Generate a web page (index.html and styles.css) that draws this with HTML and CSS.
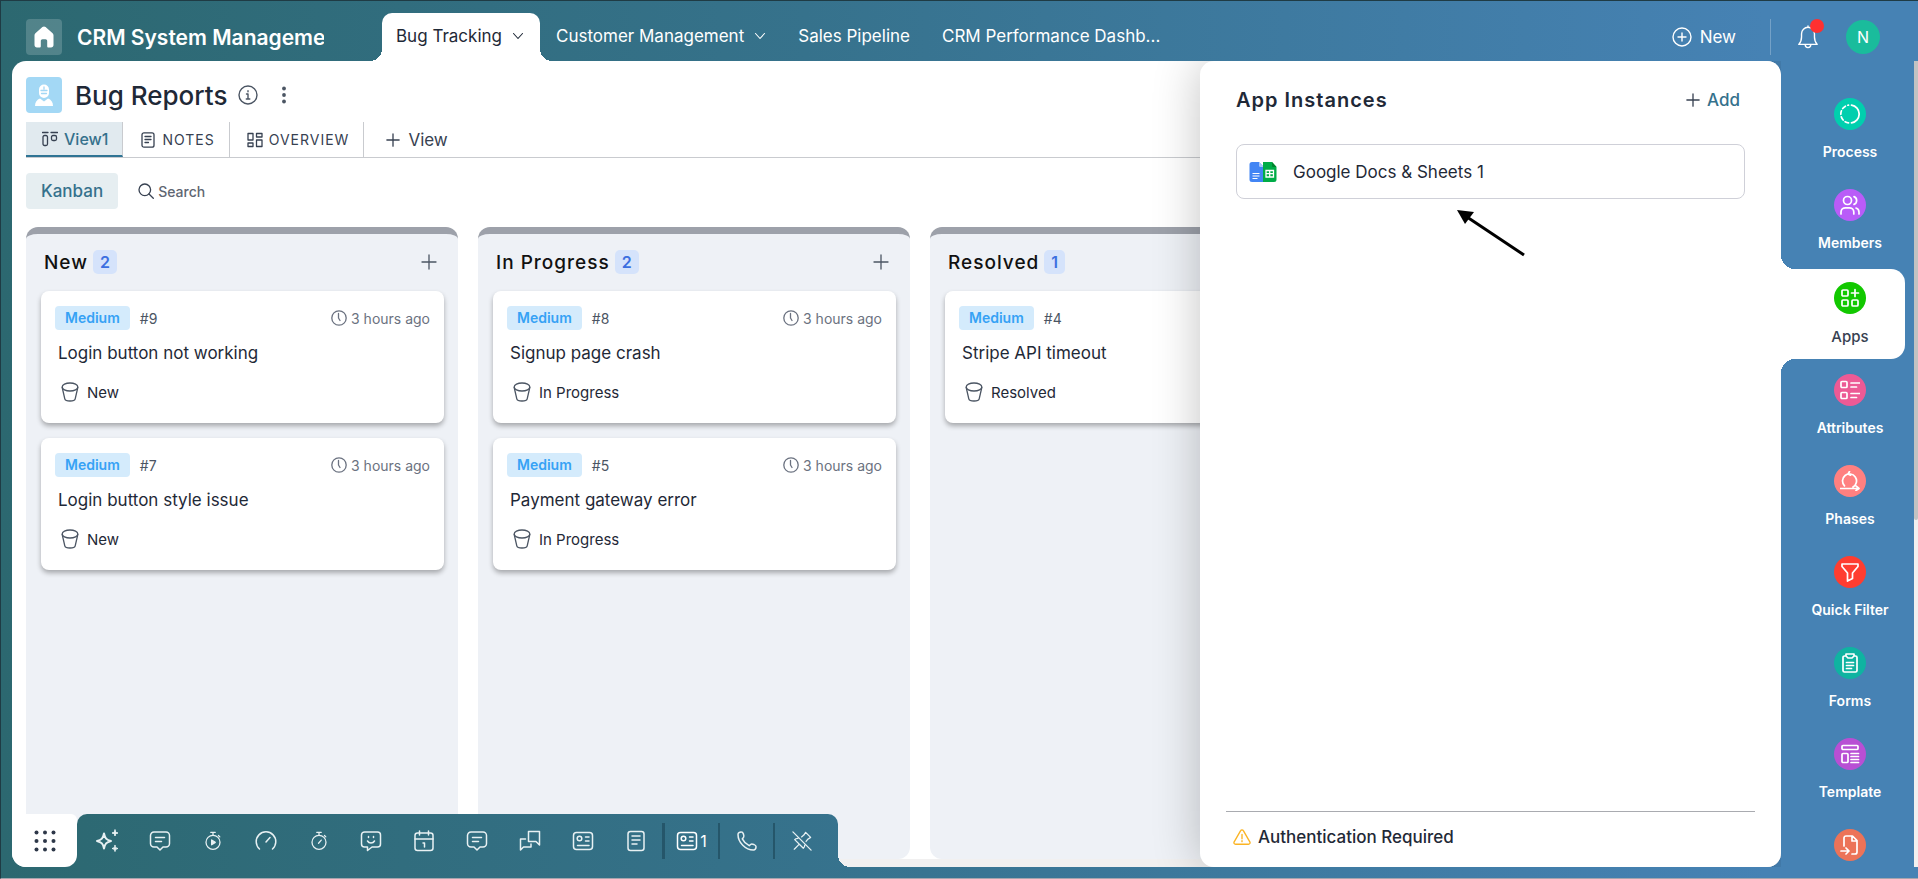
FILE: index.html
```html
<!DOCTYPE html>
<html lang="en">
<head>
    <meta charset="utf-8">
    <meta name="viewport" content="width=device-width, initial-scale=1.0">
    <title>Bug Reports - CRM System Management</title>
    <link rel="stylesheet" href="styles.css">
</head>
<body>
    <!-- Icon sprite -->
    <svg class="sprite" aria-hidden="true">
        <symbol id="i-home" viewBox="0 0 24 24"><path fill="currentColor" d="M12 1.5c.6 0 1.100.2 1.600.6l7 6.200c.6.500.9 1.200.9 2V20c0 1.400-1 2.500-2.500 2.500h-2.500c-.8 0-1.300-.5-1.300-1.300V16c0-1-.7-1.700-1.700-1.700h-3c-1 0-1.700.7-1.700 1.700v5.200c0 .8-.5 1.300-1.300 1.300H5C3.500 22.500 2.500 21.400 2.500 20v-9.700c0-.8.300-1.500.9-2l7-6.200c.5-.4 1-.6 1.600-.6z"/></symbol>
        <symbol id="i-chevron" viewBox="0 0 12 12"><path d="M1.500 3.500 6 8.500l4.500-5"/></symbol>
        <symbol id="i-plus" viewBox="0 0 16 16"><path d="M8 1v14M1 8h14"/></symbol>
        <symbol id="i-plus-circle" viewBox="0 0 20 20"><circle cx="10" cy="10" r="9"/><path d="M10 6v8M6 10h8"/></symbol>
        <symbol id="i-bell" viewBox="0 0 24 26"><path d="M2 21c2-2 3-4 3-8V9.500a7 7 0 0 1 14 0V13c0 4 1 6 3 8zM9 21.500a3 3 0 0 0 6 0M12 2.500V1"/></symbol>
        <symbol id="i-user" viewBox="0 0 24 24"><path fill="#fff" d="M12 1.500a5 5 0 0 1 5 5V10a5 5 0 0 1-10 0V6.500a5 5 0 0 1 5-5zM3 23c0-4 2-6.500 5-7.500l4 3 4-3c3 1 5 3.500 5 7.500z"/><path stroke="#a3d8f5" fill="none" stroke-width="1.300" d="M9 7.500h6M12 4v2M9.500 10.500h5"/></symbol>
        <symbol id="i-info" viewBox="0 0 20 20"><circle cx="10" cy="10" r="9"/><path d="M8.500 9H10v5M8.300 14h3.500M10 5.800v1"/></symbol>
        <symbol id="i-dots" viewBox="0 0 6 18"><g fill="currentColor"><circle cx="3" cy="2.500" r="1.900"/><circle cx="3" cy="9" r="1.900"/><circle cx="3" cy="15.500" r="1.900"/></g></symbol>
        <symbol id="i-kanban" viewBox="0 0 16 16"><path d="M.5 1.500h5.500M9 1.500h6.500"/><rect x="1" y="4.500" width="4.500" height="10" rx="1.500"/><rect x="9.500" y="4.500" width="5" height="5" rx="1.500"/></symbol>
        <symbol id="i-note" viewBox="0 0 14 16"><rect x="1" y=".8" width="12" height="14.400" rx="2"/><path d="M4 4.500h6M4 7.500h6M4 10.500h3.500"/></symbol>
        <symbol id="i-grid" viewBox="0 0 16 16"><rect x="1" y="1.500" width="5" height="6.500"/><rect x="9.500" y="1.500" width="5.500" height="3.500"/><rect x="1" y="11" width="5" height="3.500"/><rect x="9.500" y="8" width="5.500" height="6.500"/></symbol>
        <symbol id="i-search" viewBox="0 0 16 16"><circle cx="6.800" cy="6.800" r="5.800"/><path d="m11 11 4.300 4.300"/></symbol>
        <symbol id="i-clock" viewBox="0 0 16 16"><circle cx="8" cy="8" r="7.200"/><path d="M7.500 3.500V8L9 10.500"/></symbol>
        <symbol id="i-bucket" viewBox="0 0 18 20"><ellipse cx="9" cy="5" rx="7.800" ry="4"/><path d="m1.200 5.500 2.600 11.300c.3 1.200 2.200 2.200 5.200 2.200s4.900-1 5.200-2.200l2.600-11.300"/></symbol>
        <symbol id="i-launcher" viewBox="0 0 22 22"><g fill="currentColor"><circle cx="2.500" cy="2.500" r="2"/><circle cx="11" cy="2.500" r="2"/><circle cx="19.500" cy="2.500" r="2"/><circle cx="2.500" cy="11" r="2"/><circle cx="11" cy="11" r="2"/><circle cx="19.500" cy="11" r="2"/><circle cx="2.500" cy="19.500" r="2"/><circle cx="11" cy="19.500" r="2"/><circle cx="19.500" cy="19.500" r="2"/></g></symbol>
        <symbol id="i-sparkle" viewBox="0 0 24 24"><path stroke-width="2" d="M9 4.500c.9 4.600 2.400 6.400 7 7.500-4.600 1.100-6.100 2.900-7 7.500-.9-4.600-2.400-6.400-7-7.500 4.600-1.100 6.100-2.900 7-7.500z"/><path fill="currentColor" stroke-width="1" d="M20 1c.4 2 1 2.600 3 3-2 .4-2.600 1-3 3-.4-2-1-2.600-3-3 2-.4 2.600-1 3-3zM20 16.500c.4 2 1 2.600 3 3-2 .4-2.600 1-3 3-.4-2-1-2.600-3-3 2-.4 2.600-1 3-3z"/></symbol>
        <symbol id="i-chat" viewBox="0 0 22 22"><path d="M5 2h12a3.500 3.500 0 0 1 3.500 3.500v8A3.500 3.500 0 0 1 17 17h-3l-3 3-3-3H5a3.500 3.500 0 0 1-3.500-3.500v-8A3.500 3.500 0 0 1 5 2zM6.500 7.500h9M6.500 11.500h6"/></symbol>
        <symbol id="i-timer-play" viewBox="0 0 22 22"><circle cx="11" cy="12.500" r="7.700"/><path d="M8.500 1.500h5M11 1.500v3M17 5l1.500 1.500"/><path fill="currentColor" d="M9.500 9.800v5.400l4-2.700z"/></symbol>
        <symbol id="i-gauge" viewBox="0 0 22 22"><path d="M4.500 19A9.800 9.800 0 1 1 17.500 19M11 12l4-4.500"/></symbol>
        <symbol id="i-stopwatch" viewBox="0 0 22 22"><circle cx="11" cy="12.500" r="7.700"/><path d="M8.500 1.500h5M11 1.500v3M17 5l1.500 1.500M10.500 13.500l3-3.500"/></symbol>
        <symbol id="i-smile" viewBox="0 0 22 22"><path d="M4.500 2h13a3 3 0 0 1 3 3v9a3 3 0 0 1-3 3H12l-4.500 3.500V17h-3a3 3 0 0 1-3-3V5a3 3 0 0 1 3-3zM8.500 6.500v1M13.500 6.500v1M7.500 11c1.500 2.500 5.500 2.500 7 0"/></symbol>
        <symbol id="i-calendar" viewBox="0 0 22 22"><rect x="2" y="3" width="18" height="17.500" rx="2.500"/><path d="M6.500 1v4M15.500 1v4M2 9h18M10 13h1.500v4"/></symbol>
        <symbol id="i-chats" viewBox="0 0 22 22"><path d="M9.500 1.500h11V15l-3.500-3.500H9.500zM6.500 9H1.500v11L4.500 17h7.500v-3"/></symbol>
        <symbol id="i-card" viewBox="0 0 22 22"><rect x="1.500" y="2.500" width="19" height="17" rx="3"/><circle cx="7.500" cy="8.500" r="2.300"/><path d="M13.500 7h3.500M13.500 11h3.500M5.500 15.500h11.500"/></symbol>
        <symbol id="i-doc" viewBox="0 0 22 22"><rect x="3" y="1.500" width="16" height="19" rx="2.500"/><path d="M7 6h8M7 10h8M7 14h5"/></symbol>
        <symbol id="i-phone" viewBox="0 0 22 22"><path d="M2 4.500C2 3 3.500 1.800 5.500 2c1.200 0 1.500 1 2 2.200.5 1.300.8 2.300 0 3.200L6.300 8.800c1.500 3 3.900 5.400 6.900 6.900l1.400-1.200c.9-.8 1.900-.5 3.200 0 1.200.5 2.200.8 2.200 2 .2 2-1 3.500-2.500 3.500C9.500 20 2 12.500 2 4.500z"/></symbol>
        <symbol id="i-pin-off" viewBox="0 0 22 22"><path d="M1 1l20 20M2.500 20l5-5M13 4.500l2-3 5.500 5.500-3 2M10.500 6.500 13 4.500M15.500 11.500l2-2.500M6.500 8C4.500 8 3.500 8.500 3 9.500l9.500 9.500c1-.5 1.500-1.500 1.500-3.500"/></symbol>
        <symbol id="i-warning" viewBox="0 0 20 18"><path d="M8.500 1.900a1.700 1.700 0 0 1 3 0l7.200 12.600c.7 1.200-.1 2.500-1.500 2.500H2.800c-1.400 0-2.200-1.300-1.500-2.500zM10 6v5M10 13v1.200"/></symbol>
        <symbol id="i-process" viewBox="0 0 20 20"><path d="M11.500 1.100a9 9 0 0 1 0 17.800"/><path stroke-dasharray="3.600 2.600" d="M8.500 18.900a9 9 0 0 1 0-17.800"/></symbol>
        <symbol id="i-members" viewBox="0 0 20 20"><circle cx="7.500" cy="5.500" r="4"/><path d="M1 19v-2c0-2.500 2-4.200 4.500-4.200h3.800c2.500 0 4.500 1.700 4.500 4.200v2M14 1.600a4.200 4.200 0 0 1 0 7.800M16 13c2 .6 3 2.200 3 4.200V19"/></symbol>
        <symbol id="i-apps" viewBox="0 0 20 20"><rect x="2" y="2" width="6" height="6" rx="1"/><rect x="2" y="12" width="6" height="6" rx="1"/><rect x="12" y="12" width="6" height="6" rx="1"/><path d="M15 1.500v7M11.500 5h7"/></symbol>
        <symbol id="i-attributes" viewBox="0 0 20 20"><rect x="1" y="1.500" width="6" height="6" rx="1"/><rect x="1" y="12.500" width="6" height="6" rx="1"/><path d="M11 3h8.500M11 7h5.500M11 13.500h8.500M11 17.500h5.500"/></symbol>
        <symbol id="i-phases" viewBox="0 0 20 20"><path d="M4.500 14.800A7 7 0 1 1 13 16M.5 17.500h18M16 14.800l3 2.700-3 2M9.500.5 8 3l2.500 1.200"/></symbol>
        <symbol id="i-filter" viewBox="0 0 20 20"><path d="M2 2h16v2.500L12.500 11v5.500L7.500 19v-8L2 4.500z"/></symbol>
        <symbol id="i-forms" viewBox="0 0 20 20"><path d="M6 3H4.500A1.500 1.500 0 0 0 3 4.500v13A1.500 1.500 0 0 0 4.500 19h11a1.500 1.500 0 0 0 1.500-1.500v-13A1.500 1.500 0 0 0 15.500 3H14M6 1h8v2l-2 2H8L6 3zM6.500 9.500h7M6.500 12.500h7M6.500 15.500h5"/></symbol>
        <symbol id="i-template" viewBox="0 0 20 20"><rect x="2" y="1.500" width="16" height="4" rx="1"/><rect x="2" y="9.500" width="6" height="9" rx="1"/><path d="M11 9.500h7.500M11 12.500h7.500M11 15.500h7.500M11 18.500h7.500"/></symbol>
        <symbol id="i-import" viewBox="0 0 20 20"><path d="M4 11V3a2 2 0 0 1 2-2h6.500L17 5.500V17a2 2 0 0 1-2 2h-3M12 1v5h5M1 16h7.500M6 13l3 3-3 3"/></symbol>
    </svg>

    <header class="topbar">
        <a class="home" href="#" aria-label="Home"><svg class="icon icon-24"><use href="#i-home"/></svg></a>
        <h1 class="app-name">CRM System Management</h1>
        <nav class="app-tabs">
            <a class="app-tab active" href="#">Bug Tracking <svg class="icon icon-12"><use href="#i-chevron"/></svg></a>
            <a class="app-tab" href="#">Customer Management <svg class="icon icon-12"><use href="#i-chevron"/></svg></a>
            <a class="app-tab" href="#">Sales Pipeline</a>
            <a class="app-tab" href="#">CRM Performance Dashb...</a>
        </nav>
        <button class="new-button" type="button"><svg class="icon icon-20"><use href="#i-plus-circle"/></svg>New</button>
        <div class="account">
            <button class="bell" type="button" aria-label="Notifications"><svg class="icon icon-24"><use href="#i-bell"/></svg></button>
            <button class="avatar" type="button">N</button>
        </div>
    </header>

    <div class="layout">
        <main class="workspace">
            <div class="page-title">
                <span class="page-icon"><svg class="icon icon-24"><use href="#i-user"/></svg></span>
                <h2>Bug Reports</h2>
                <button class="plain" type="button" aria-label="Info"><svg class="icon icon-20"><use href="#i-info"/></svg></button>
                <button class="plain more" type="button" aria-label="More"><svg class="icon icon-dots"><use href="#i-dots"/></svg></button>
            </div>

            <nav class="view-tabs">
                <a class="view-tab active" href="#"><svg class="icon icon-16"><use href="#i-kanban"/></svg>View1</a>
                <a class="view-tab" href="#"><svg class="icon icon-16"><use href="#i-note"/></svg>NOTES</a>
                <a class="view-tab" href="#"><svg class="icon icon-16"><use href="#i-grid"/></svg>OVERVIEW</a>
                <button class="add-view" type="button"><svg class="icon icon-14"><use href="#i-plus"/></svg>View</button>
            </nav>

            <div class="board-tools">
                <button class="kanban-button" type="button">Kanban</button>
                <label class="search">
                    <svg class="icon icon-16"><use href="#i-search"/></svg>
                    <input type="text" placeholder="Search" aria-label="Search">
                </label>
            </div>

            <div class="board">
                <section class="column">
                    <header class="column-header">
                        <h3>New</h3><span class="count">2</span>
                        <button class="plain" type="button" aria-label="Add card"><svg class="icon icon-16"><use href="#i-plus"/></svg></button>
                    </header>
                    <article class="card">
                        <div class="card-meta">
                            <span class="priority">Medium</span><span class="card-id">#9</span>
                            <span class="card-time"><svg class="icon icon-16"><use href="#i-clock"/></svg>3 hours ago</span>
                        </div>
                        <h4>Login button not working</h4>
                        <p class="card-stage"><svg class="icon icon-bucket"><use href="#i-bucket"/></svg>New</p>
                    </article>
                    <article class="card">
                        <div class="card-meta">
                            <span class="priority">Medium</span><span class="card-id">#7</span>
                            <span class="card-time"><svg class="icon icon-16"><use href="#i-clock"/></svg>3 hours ago</span>
                        </div>
                        <h4>Login button style issue</h4>
                        <p class="card-stage"><svg class="icon icon-bucket"><use href="#i-bucket"/></svg>New</p>
                    </article>
                </section>

                <section class="column">
                    <header class="column-header">
                        <h3>In Progress</h3><span class="count">2</span>
                        <button class="plain" type="button" aria-label="Add card"><svg class="icon icon-16"><use href="#i-plus"/></svg></button>
                    </header>
                    <article class="card">
                        <div class="card-meta">
                            <span class="priority">Medium</span><span class="card-id">#8</span>
                            <span class="card-time"><svg class="icon icon-16"><use href="#i-clock"/></svg>3 hours ago</span>
                        </div>
                        <h4>Signup page crash</h4>
                        <p class="card-stage"><svg class="icon icon-bucket"><use href="#i-bucket"/></svg>In Progress</p>
                    </article>
                    <article class="card">
                        <div class="card-meta">
                            <span class="priority">Medium</span><span class="card-id">#5</span>
                            <span class="card-time"><svg class="icon icon-16"><use href="#i-clock"/></svg>3 hours ago</span>
                        </div>
                        <h4>Payment gateway error</h4>
                        <p class="card-stage"><svg class="icon icon-bucket"><use href="#i-bucket"/></svg>In Progress</p>
                    </article>
                </section>

                <section class="column">
                    <header class="column-header">
                        <h3>Resolved</h3><span class="count">1</span>
                    </header>
                    <article class="card">
                        <div class="card-meta">
                            <span class="priority">Medium</span><span class="card-id">#4</span>
                        </div>
                        <h4>Stripe API timeout</h4>
                        <p class="card-stage"><svg class="icon icon-bucket"><use href="#i-bucket"/></svg>Resolved</p>
                    </article>
                </section>
            </div>

            <!-- Bottom dock -->
            <div class="dock">
                <button class="launcher" type="button" aria-label="All apps"><svg class="icon icon-22"><use href="#i-launcher"/></svg></button>
                <div class="toolbar">
                    <div class="tool-group">
                        <button class="tool" type="button" aria-label="Assistant"><svg class="icon icon-24"><use href="#i-sparkle"/></svg></button>
                        <button class="tool" type="button" aria-label="Messages"><svg class="icon icon-22"><use href="#i-chat"/></svg></button>
                        <button class="tool" type="button" aria-label="Start timer"><svg class="icon icon-20"><use href="#i-timer-play"/></svg></button>
                        <button class="tool" type="button" aria-label="Dashboard"><svg class="icon icon-22"><use href="#i-gauge"/></svg></button>
                        <button class="tool" type="button" aria-label="Stopwatch"><svg class="icon icon-20"><use href="#i-stopwatch"/></svg></button>
                        <button class="tool" type="button" aria-label="Feedback"><svg class="icon icon-22"><use href="#i-smile"/></svg></button>
                        <button class="tool" type="button" aria-label="Calendar"><svg class="icon icon-22"><use href="#i-calendar"/></svg></button>
                        <button class="tool" type="button" aria-label="Comments"><svg class="icon icon-22"><use href="#i-chat"/></svg></button>
                        <button class="tool" type="button" aria-label="Conversations"><svg class="icon icon-22"><use href="#i-chats"/></svg></button>
                        <button class="tool" type="button" aria-label="Contacts"><svg class="icon icon-22"><use href="#i-card"/></svg></button>
                        <button class="tool" type="button" aria-label="Documents"><svg class="icon icon-22"><use href="#i-doc"/></svg></button>
                    </div>
                    <button class="tool divided wide" type="button"><svg class="icon icon-22"><use href="#i-card"/></svg>1</button>
                    <button class="tool divided" type="button" aria-label="Call"><svg class="icon icon-22"><use href="#i-phone"/></svg></button>
                    <button class="tool divided" type="button" aria-label="Unpin toolbar"><svg class="icon icon-20"><use href="#i-pin-off"/></svg></button>
                </div>
            </div>

            <!-- App instances drawer -->
            <aside class="drawer">
                <header class="drawer-header">
                    <h2>App Instances</h2>
                    <button class="add-button" type="button"><svg class="icon icon-14"><use href="#i-plus"/></svg>Add</button>
                </header>
                <button class="instance" type="button">
                    <svg class="instance-logo" viewBox="0 0 28 22">
                        <path fill="#4285f4" d="M3 1h7l5 5v15H3a2.500 2.500 0 0 1-2.500-2.500v-15A2.500 2.500 0 0 1 3 1z"/>
                        <path fill="#a8c7fa" d="M10 1l5 5h-3.500A1.500 1.500 0 0 1 10 4.500z"/>
                        <path stroke="#fff" stroke-width="1.200" d="M3.500 12.500h7M3.500 15h7M3.500 17.500h5"/>
                        <path fill="#00ac47" d="M14 1h9l4.500 5v12.500A2.500 2.500 0 0 1 25 21H14z"/>
                        <path fill="#00832d" d="M23 1l4.500 5H24a1 1 0 0 1-1-1z"/>
                        <path fill="none" stroke="#fff" stroke-width="1.300" d="M17 9.500h7.500v6.500H17zM17 12.700h7.500M20.700 9.500V16"/>
                    </svg>
                    Google Docs &amp; Sheets 1
                </button>
                <svg class="pointer" viewBox="0 0 70 47" aria-hidden="true">
                    <path d="M10 7 67 45" stroke="#000" stroke-width="3"/>
                    <path d="M0 0l17 2-9 12z"/>
                </svg>
                <footer class="drawer-footer"><svg class="icon icon-18"><use href="#i-warning"/></svg>Authentication Required</footer>
            </aside>
        </main>

        <nav class="sidebar">
            <a class="side-item" href="#"><span class="side-icon process"><svg class="icon icon-20"><use href="#i-process"/></svg></span>Process</a>
            <a class="side-item" href="#"><span class="side-icon members"><svg class="icon icon-20"><use href="#i-members"/></svg></span>Members</a>
            <a class="side-item active" href="#"><span class="side-icon apps"><svg class="icon icon-20"><use href="#i-apps"/></svg></span>Apps</a>
            <a class="side-item" href="#"><span class="side-icon attributes"><svg class="icon icon-20"><use href="#i-attributes"/></svg></span>Attributes</a>
            <a class="side-item" href="#"><span class="side-icon phases"><svg class="icon icon-20"><use href="#i-phases"/></svg></span>Phases</a>
            <a class="side-item" href="#"><span class="side-icon filter"><svg class="icon icon-20"><use href="#i-filter"/></svg></span>Quick Filter</a>
            <a class="side-item" href="#"><span class="side-icon forms"><svg class="icon icon-20"><use href="#i-forms"/></svg></span>Forms</a>
            <a class="side-item" href="#"><span class="side-icon template"><svg class="icon icon-20"><use href="#i-template"/></svg></span>Template</a>
            <a class="side-item" href="#" aria-label="Import"><span class="side-icon import"><svg class="icon icon-20"><use href="#i-import"/></svg></span></a>
        </nav>
        <div class="scroll-track"><div class="scroll-thumb"></div></div>
    </div>
</body>
</html>
```
FILE: styles.css
```css
:root {
    --brand: linear-gradient(to right, #2c6870, #36728c 42%, #4682b4 92%);
    --teal: #35718c;
    --text: #1f2937;
    --muted: #6b7280;
    --line: #c9cbcf;
    --column: #eef1f6;
    --radius: 14px;
}

* {
    margin: 0;
    padding: 0;
    box-sizing: border-box;
}

body {
    font-family: Inter, "Liberation Sans", sans-serif;
    font-size: 16px;
    color: var(--text);
    background: var(--brand) fixed;
    border: 1px solid #1f3b44;
    border-right: 0;
    border-bottom-color: #a9a4ad;
    height: 100vh;
    display: flex;
    flex-direction: column;
    overflow: hidden;
}

a {
    color: inherit;
    text-decoration: none;
}

button {
    font: inherit;
    color: inherit;
    background: none;
    border: 0;
    cursor: pointer;
}

h1, h2, h3, h4 {
    font-weight: 500;
}

.sprite {
    position: absolute;
    width: 0;
    height: 0;
}

/* Icons */
.icon {
    flex: none;
    fill: none;
    stroke: currentColor;
    stroke-width: 1.5;
    stroke-linecap: round;
    stroke-linejoin: round;
}

.icon-12 { width: 12px; height: 12px; stroke-width: 1.1; }
.icon-14 { width: 14px; height: 14px; }
.icon-16 { width: 16px; height: 16px; stroke-width: 1.3; }
.icon-18 { width: 18px; height: 18px; }
.icon-20 { width: 20px; height: 20px; stroke-width: 1.4; }
.icon-22 { width: 22px; height: 22px; }
.icon-24 { width: 24px; height: 24px; }
.icon-dots { width: 6px; height: 18px; stroke: none; }
.icon-bucket { width: 18px; height: 20px; stroke-width: 1.3; }

/* Top bar */
.topbar {
    flex: none;
    height: 60px;
    display: flex;
    align-items: center;
    padding: 12px 0 0 25px;
    color: #fff;
}

.home {
    width: 36px;
    height: 36px;
    display: grid;
    place-items: center;
    border-radius: 4px;
    background: rgba(255, 255, 255, 0.18);
}

.home .icon {
    stroke: none;
}

.app-name {
    width: 247px;
    margin: 0 58px 0 15px;
    font-size: 21px;
    font-weight: 600;
    white-space: nowrap;
    overflow: hidden;
}

.app-tabs {
    display: flex;
    flex: 1;
    font-size: 17px;
}

.app-tab {
    display: flex;
    align-items: center;
    gap: 10px;
    height: 48px;
    padding: 0 16px 3px;
    white-space: nowrap;
}

.app-tab.active {
    position: relative;
    background: #fff;
    color: var(--text);
    border-radius: 10px 10px 0 0;
    padding-left: 14px;
}

.app-tab.active::before,
.app-tab.active::after {
    content: "";
    position: absolute;
    bottom: 0;
    width: 12px;
    height: 12px;
}

.app-tab.active::before {
    right: 100%;
    background: radial-gradient(circle at top left, transparent 12px, #fff 12px);
}

.app-tab.active::after {
    left: 100%;
    background: radial-gradient(circle at top right, transparent 12px, #fff 12px);
}

.new-button {
    display: flex;
    align-items: center;
    gap: 8px;
    font-size: 17px;
    margin-right: 34px;
}

.account {
    display: flex;
    align-items: center;
    gap: 26px;
    height: 36px;
    padding: 0 38px 0 25px;
    border-left: 1px solid rgba(255, 255, 255, 0.25);
}

.bell {
    position: relative;
    display: flex;
}

.bell::after {
    content: "";
    position: absolute;
    top: -6px;
    right: -4px;
    width: 14px;
    height: 14px;
    border-radius: 50%;
    background: #ff3030;
}

.avatar {
    width: 34px;
    height: 34px;
    border-radius: 50%;
    background: #1abc9c;
    font-size: 16px;
}

/* Layout */
.layout {
    flex: 1;
    min-height: 0;
    display: flex;
    padding: 0 0 11px 11px;
}

.workspace {
    position: relative;
    flex: 1;
    min-width: 0;
    display: flex;
    flex-direction: column;
    padding: 16px 0 0 14px;
    background: #fff;
    border-radius: var(--radius);
}

.page-title {
    display: flex;
    align-items: center;
    height: 36px;
    gap: 11px;
}

.page-title h2 {
    font-size: 26px;
    margin-left: 2px;
}

.page-icon {
    width: 36px;
    height: 36px;
    display: grid;
    place-items: center;
    border-radius: 4px;
    background: #a3d8f5;
}

.page-icon .icon {
    stroke: none;
}

.plain {
    display: flex;
    color: #4b5563;
}

.more {
    margin-left: 12px;
}

.view-tabs {
    display: flex;
    margin-top: 9px;
    border-bottom: 1px solid var(--line);
    color: #374151;
    font-size: 14px;
}

.view-tab {
    display: flex;
    align-items: center;
    gap: 6px;
    height: 35px;
    padding: 0 14px 0 17px;
    border-right: 1px solid var(--line);
    letter-spacing: 1px;
}

.view-tab.active {
    background: #e1eaef;
    color: var(--teal);
    border-bottom: 2px solid #2f7494;
    font-weight: 500;
    letter-spacing: 0;
    font-size: 16px;
    padding: 0 14px 0 16px;
}

.view-tab .icon {
    color: #374151;
}

.add-view {
    display: flex;
    align-items: center;
    gap: 8px;
    padding-left: 22px;
    font-size: 17px;
}

.board-tools {
    display: flex;
    align-items: center;
    gap: 20px;
    margin: 15px 0 18px;
}

.kanban-button {
    height: 36px;
    padding: 0 15px;
    border-radius: 4px;
    background: #e6eef1;
    color: var(--teal);
    font-size: 17px;
    font-weight: 500;
}

.search {
    display: flex;
    align-items: center;
    gap: 4px;
    color: #374151;
}

.search input {
    width: 120px;
    border: 0;
    outline: 0;
    font: inherit;
    font-size: 14px;
    font-weight: 500;
}

.search input::placeholder {
    color: #5f6672;
}

/* Board */
.board {
    flex: 1;
    min-height: 0;
    display: flex;
    gap: 20px;
    overflow: hidden;
    border-bottom: 8px solid #f1f0f0;
    border-radius: 0 0 var(--radius) 0;
}

.column {
    flex: none;
    width: 432px;
    padding: 14px 14px 0 15px;
    border-top: 7px solid #9da1aa;
    border-radius: 12px;
    background: var(--column);
}

.column-header {
    display: flex;
    align-items: center;
    gap: 5px;
    height: 28px;
    margin-bottom: 15px;
    padding: 0 7px 0 3px;
}

.column-header h3 {
    font-size: 19px;
    letter-spacing: 1px;
    color: #111;
}

.column-header .plain {
    margin-left: auto;
}

.count {
    padding: 0 7px;
    border-radius: 5px;
    background: #d5e3fb;
    color: #3b6fe0;
    font-weight: 600;
    line-height: 24px;
}

.card {
    height: 132px;
    padding: 15px 14px;
    margin-bottom: 15px;
    border-radius: 8px;
    background: #fff;
    box-shadow: 0 3px 5px rgba(0, 0, 0, 0.3);
}

.card-meta {
    display: flex;
    align-items: center;
    font-size: 14px;
}

.priority {
    padding: 0 10px;
    border-radius: 4px;
    background: #d4ebfc;
    color: #36a2f5;
    font-weight: 600;
    line-height: 24px;
}

.card-id {
    margin-left: 10px;
    color: #4b5563;
}

.card-time {
    display: flex;
    align-items: center;
    gap: 4px;
    margin-left: auto;
    color: var(--muted);
}

.card h4 {
    margin: 11px 0 17px 3px;
    font-size: 17px;
    font-weight: 400;
    line-height: 24px;
}

.card-stage {
    display: flex;
    align-items: center;
    gap: 8px;
    margin-left: 6px;
    font-size: 15px;
}

.card-stage .icon {
    color: #4b5563;
}

/* Dock */
.dock {
    position: absolute;
    left: 0;
    bottom: 0;
    height: 53px;
    display: flex;
}

.launcher {
    position: relative;
    z-index: 1;
    width: 65px;
    display: grid;
    place-items: center;
    background: #fff;
    border-radius: 0 6px 12px 14px;
    color: #2d3748;
}

.launcher .icon {
    stroke: none;
}

.toolbar {
    position: relative;
    width: 761px;
    display: flex;
    align-items: center;
    padding: 0 10px 0 4px;
    border-radius: 10px 10px 0 0;
    background: var(--brand) fixed;
    color: #e8f1f3;
}

.toolbar::before,
.toolbar::after {
    content: "";
    position: absolute;
    bottom: 0;
    width: 12px;
    height: 12px;
    background: var(--brand) fixed;
}

.toolbar::before {
    right: 100%;
}

.toolbar::after {
    left: 100%;
    mask: radial-gradient(circle at top right, transparent 12px, #000 12px);
}

.tool-group {
    flex: 1;
    display: flex;
}

.tool {
    flex: 1;
    height: 36px;
    display: flex;
    align-items: center;
    justify-content: center;
}

.tool.divided {
    flex: none;
    width: 55px;
    border-left: 2px solid #25566a;
}

.tool.divided.wide {
    width: 56px;
    border-left-width: 3px;
    gap: 2px;
    color: #fff;
}

/* Drawer */
.drawer {
    position: absolute;
    top: 0;
    right: 0;
    bottom: 0;
    width: 581px;
    display: flex;
    flex-direction: column;
    padding: 24px 26px 0;
    border-radius: var(--radius);
    background: #fff;
    box-shadow: 0 0 48px rgba(0, 0, 0, 0.24);
    clip-path: inset(0 0 0 -60px);
}

.drawer-header {
    display: flex;
    align-items: center;
    justify-content: space-between;
    height: 30px;
    padding: 0 15px 0 10px;
}

.drawer-header h2 {
    font-size: 20px;
    font-weight: 600;
    letter-spacing: 1px;
}

.add-button {
    display: flex;
    align-items: center;
    gap: 7px;
    color: var(--teal);
    font-size: 17px;
    font-weight: 500;
}

.add-button .icon {
    color: #374151;
}

.instance {
    display: flex;
    align-items: center;
    gap: 16px;
    height: 55px;
    margin: 29px 10px 0;
    padding: 0 12px;
    border: 1px solid #cfd0d8;
    border-radius: 8px;
    font-size: 17px;
}

.instance-logo {
    width: 28px;
    height: 22px;
}

.pointer {
    position: absolute;
    top: 149px;
    left: 257px;
    width: 70px;
    height: 47px;
}

.drawer-footer {
    display: flex;
    align-items: center;
    gap: 7px;
    height: 56px;
    margin-top: auto;
    padding: 0 0 6px 7px;
    border-top: 1px solid #a9abb0;
    font-size: 17px;
    font-weight: 500;
}

.drawer-footer .icon {
    color: #fbb424;
}

/* Sidebar */
.sidebar {
    flex: none;
    width: 133px;
    padding-top: 25px;
    overflow: hidden;
    color: #fff;
    font-size: 14px;
    font-weight: 600;
}

.side-item {
    height: 91px;
    display: flex;
    flex-direction: column;
    align-items: center;
    gap: 13px;
    padding: 12px 0 0 5px;
}

.side-item.active {
    position: relative;
    height: 90px;
    margin: 1px 9px 3px 0;
    padding: 13px 0 0 14px;
    border-radius: 0 var(--radius) var(--radius) 0;
    background: #fff;
    color: #374151;
    font-size: 15px;
    font-weight: 500;
}

.side-item.active::before,
.side-item.active::after {
    content: "";
    position: absolute;
    left: 0;
    width: 14px;
    height: 14px;
}

.side-item.active::before {
    bottom: 100%;
    background: radial-gradient(circle at top right, transparent 14px, #fff 14px);
}

.side-item.active::after {
    top: 100%;
    background: radial-gradient(circle at bottom right, transparent 14px, #fff 14px);
}

.side-icon {
    width: 32px;
    height: 32px;
    display: grid;
    place-items: center;
    border-radius: 50%;
    color: #fff;
}

.side-icon .icon {
    stroke-width: 1.7;
}

.process { background: #00cfae; }
.members { background: #b95cf8; }
.apps { background: #12c800; }
.attributes { background: #ec5a95; }
.phases { background: #ff8080; }
.filter { background: #ff3d30; }
.forms { background: #0fb3a1; }
.template { background: #b84fd4; }
.import { background: #ec7358; }

.scroll-track {
    flex: none;
    width: 4px;
    background: #f1f0f0;
}

.scroll-thumb {
    height: 57%;
    border-radius: 0 0 2px 2px;
    background: #c2c2c2;
}
```
